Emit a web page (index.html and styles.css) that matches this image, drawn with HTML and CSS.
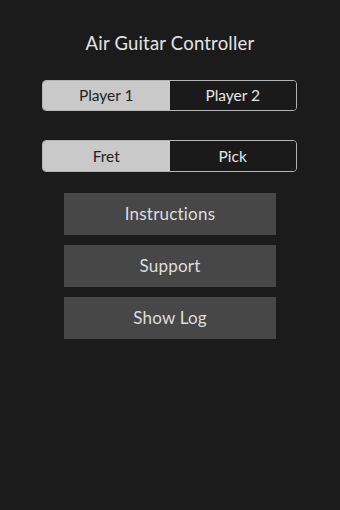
FILE: index.html
```html
<!DOCTYPE html>
<html>
<head>
<meta charset="utf-8">
<link rel="stylesheet" href="styles.css">
</head>
<body>
<main class="screen">
  <h1 class="title">Air Guitar Controller</h1>
  <div class="segmented seg-player">
    <div class="seg selected">Player 1</div>
    <div class="seg">Player 2</div>
  </div>
  <div class="segmented seg-mode">
    <div class="seg selected">Fret</div>
    <div class="seg">Pick</div>
  </div>
  <div class="buttons">
    <div class="btn">Instructions</div>
    <div class="btn">Support</div>
    <div class="btn">Show Log</div>
  </div>
</main>
</body>
</html>
```
FILE: styles.css
```css
html, body {
  margin: 0;
  padding: 0;
  background: #1b1b1b;
}
body {
  width: 340px;
  height: 510px;
  font-family: Lato, "Open Sans", sans-serif;
  color: #e2e2e2;
}
.screen {
  display: flex;
  flex-direction: column;
  align-items: center;
  padding-top: 33px;
}
.title {
  margin: 0;
  font-size: 18.5px;
  font-weight: 400;
  line-height: 21px;
  color: #e4e4e4;
  letter-spacing: 0.2px;
}
.segmented {
  display: flex;
  width: 255px;
  box-sizing: border-box;
  border: 1px solid #b4b4b4;
  border-radius: 4px;
  overflow: hidden;
  margin-right: 1px;
}
.seg-player {
  margin-top: 26px;
  height: 31px;
}
.seg-mode {
  margin-top: 29px;
  height: 32px;
}
.seg {
  flex: 1;
  display: flex;
  align-items: center;
  justify-content: center;
  font-size: 15.5px;
  color: #e6e6e6;
  background: #1a1a1a;
  padding-bottom: 1px;
}
.seg.selected {
  background: #c9c9c9;
  color: #222;
}
.buttons {
  margin-top: 21px;
  display: flex;
  flex-direction: column;
  gap: 10px;
}
.btn {
  width: 212px;
  height: 42px;
  background: #474747;
  display: flex;
  align-items: center;
  justify-content: center;
  font-size: 17px;
  color: #dedede;
  letter-spacing: 0.2px;
  padding-bottom: 1px;
  box-sizing: border-box;
}
```
